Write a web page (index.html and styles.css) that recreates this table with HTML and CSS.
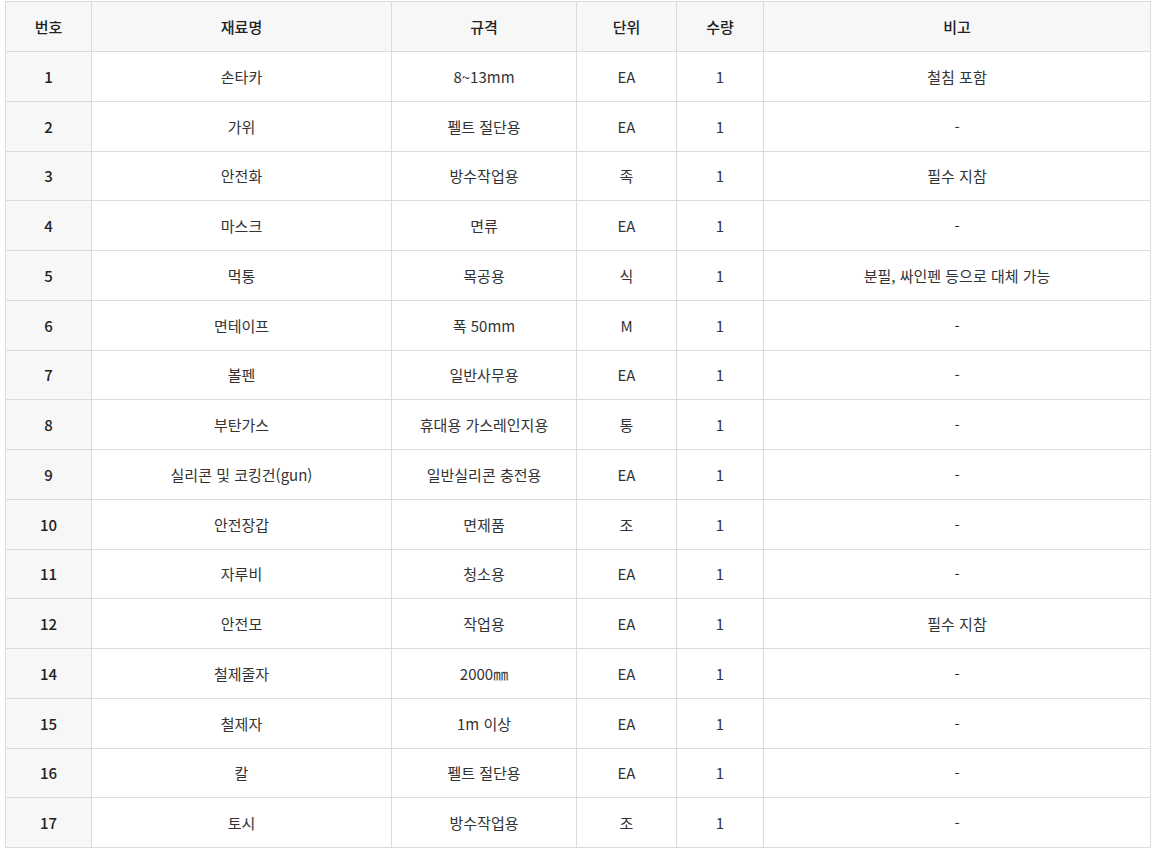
FILE: index.html
```html
<!DOCTYPE html>
<html lang="ko">
<head>
<meta charset="utf-8">
<link rel="stylesheet" href="styles.css">
</head>
<body>
<div class="wrap">
<table class="tbl">
<colgroup>
<col class="c1"><col class="c2"><col class="c3"><col class="c4"><col class="c5"><col class="c6">
</colgroup>
<thead>
<tr><th>번호</th><th>재료명</th><th>규격</th><th>단위</th><th>수량</th><th>비고</th></tr>
</thead>
<tbody>
<tr><th>1</th><td>손타카</td><td>8~13mm</td><td>EA</td><td>1</td><td>철침 포함</td></tr>
<tr><th>2</th><td>가위</td><td>펠트 절단용</td><td>EA</td><td>1</td><td>-</td></tr>
<tr><th>3</th><td>안전화</td><td>방수작업용</td><td>족</td><td>1</td><td>필수 지참</td></tr>
<tr><th>4</th><td>마스크</td><td>면류</td><td>EA</td><td>1</td><td>-</td></tr>
<tr><th>5</th><td>먹통</td><td>목공용</td><td>식</td><td>1</td><td>분필, 싸인펜 등으로 대체 가능</td></tr>
<tr><th>6</th><td>면테이프</td><td>폭 50mm</td><td>M</td><td>1</td><td>-</td></tr>
<tr><th>7</th><td>볼펜</td><td>일반사무용</td><td>EA</td><td>1</td><td>-</td></tr>
<tr><th>8</th><td>부탄가스</td><td>휴대용 가스레인지용</td><td>통</td><td>1</td><td>-</td></tr>
<tr><th>9</th><td>실리콘 및 코킹건(gun)</td><td>일반실리콘 충전용</td><td>EA</td><td>1</td><td>-</td></tr>
<tr><th>10</th><td>안전장갑</td><td>면제품</td><td>조</td><td>1</td><td>-</td></tr>
<tr><th>11</th><td>자루비</td><td>청소용</td><td>EA</td><td>1</td><td>-</td></tr>
<tr><th>12</th><td>안전모</td><td>작업용</td><td>EA</td><td>1</td><td>필수 지참</td></tr>
<tr><th>14</th><td>철제줄자</td><td>2000㎜</td><td>EA</td><td>1</td><td>-</td></tr>
<tr><th>15</th><td>철제자</td><td>1m 이상</td><td>EA</td><td>1</td><td>-</td></tr>
<tr><th>16</th><td>칼</td><td>펠트 절단용</td><td>EA</td><td>1</td><td>-</td></tr>
<tr><th>17</th><td>토시</td><td>방수작업용</td><td>조</td><td>1</td><td>-</td></tr>
</tbody>
</table>
</div>
</body>
</html>
```

FILE: styles.css
```css
html, body {
  margin: 0;
  padding: 0;
  background: #fff;
}
.wrap {
  padding: 1px 3px 0 5px;
}
.tbl {
  width: 100%;
  border-collapse: collapse;
  table-layout: fixed;
  font-family: "Noto Sans CJK KR", "Noto Sans", sans-serif;
  font-size: 15px;
  color: #333;
}
.c1 { width: 86px; }
.c2 { width: 300px; }
.c3 { width: 185px; }
.c4 { width: 100px; }
.c5 { width: 87px; }
.tbl th, .tbl td {
  border: 1px solid #dcdcdc;
  text-align: center;
  vertical-align: middle;
  padding: 0;
  height: 49.75px;
  box-sizing: border-box;
}
.tbl th {
  background: #f7f7f7;
  font-weight: 500;
  color: #222;
}
.tbl thead th {
  height: 50px;
}
.tbl td {
  font-weight: 400;
}
```
